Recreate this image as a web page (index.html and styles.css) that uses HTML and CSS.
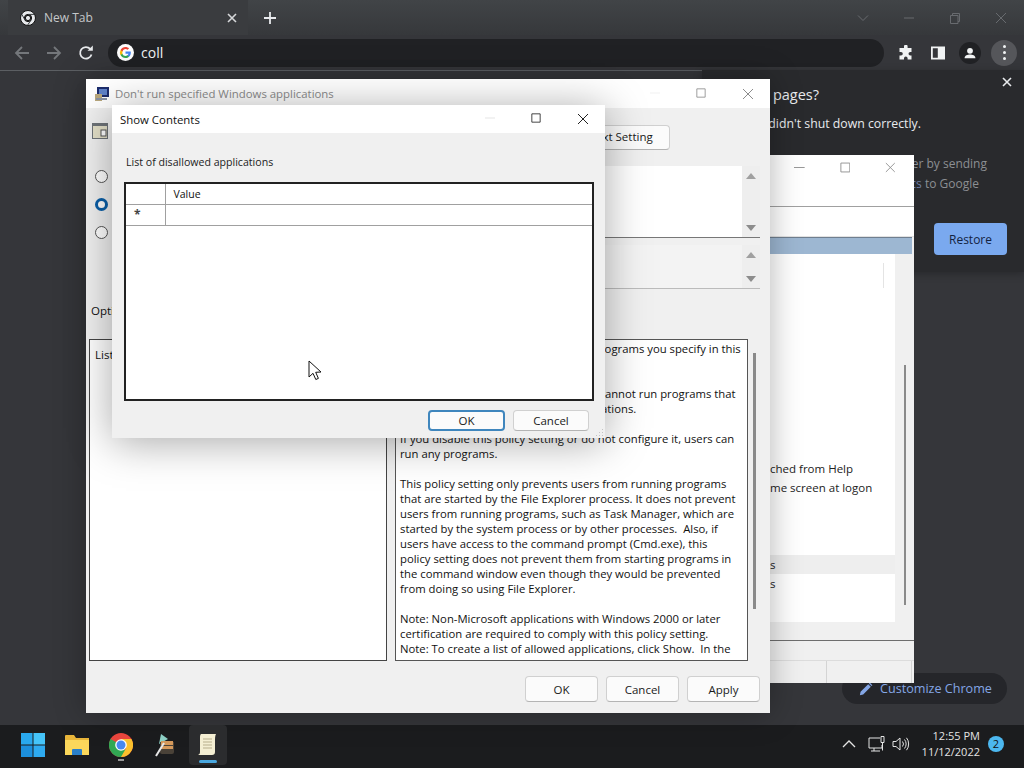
FILE: index.html
```html
<!DOCTYPE html>
<html lang="en">
<head>
    <meta charset="UTF-8">
    <title>New Tab</title>
    <link rel="stylesheet" href="styles.css">
</head>
<body>
    <div class="browser">
        <div class="tabstrip">
            <div class="tab">
                <svg class="tab-favicon" viewBox="0 0 16 16">
                    <circle cx="8" cy="8" r="7.5" fill="#e8eaed"/>
                    <circle cx="8" cy="8" r="3.6" fill="#3c4043"/>
                    <circle cx="8" cy="8" r="2.6" fill="#e8eaed"/>
                    <path d="M8 4.4h6.6M5 10l-3.4-6M10.8 10.4 7.4 15.4" stroke="#3c4043" stroke-width="1"/>
                </svg>
                <span class="tab-title">New Tab</span>
                <svg class="tab-close" viewBox="0 0 10 10"><path d="M1 1l8 8M9 1l-8 8"/></svg>
            </div>
            <svg class="new-tab" viewBox="0 0 12 12"><path d="M6 0v12M0 6h12"/></svg>
            <div class="win-controls">
                <svg viewBox="0 0 12 12"><path d="M1 3.5l5 5 5-5"/></svg>
                <svg viewBox="0 0 12 12"><path d="M1 6h10"/></svg>
                <svg viewBox="0 0 12 12"><path d="M1.5 3.5h7.5v8h-7.5zM3.5 3.5v-2h7v8h-1.500"/></svg>
                <svg viewBox="0 0 12 12"><path d="M1 1l10 10M11 1l-10 10"/></svg>
            </div>
        </div>

        <div class="toolbar">
            <svg class="nav-icon dim" viewBox="0 0 16 16"><path d="M15 8H2M8 2 2 8l6 6"/></svg>
            <svg class="nav-icon dim" viewBox="0 0 16 16"><path d="M1 8h13M8 2l6 6-6 6"/></svg>
            <svg class="nav-icon reload" viewBox="0 0 16 16"><path d="M13.500 9.500A5.800 5.800 0 1 1 12.300 4"/><path class="solid" d="M9.500 5.800h5.300V.5z"/></svg>
            <div class="omnibox">
                <svg class="g-logo" viewBox="0 0 18 18">
                    <circle cx="9" cy="9" r="9" fill="#fff"/>
                    <path d="M14.600 9.200c0-.4 0-.8-.1-1.200H9v2.300h3.100c-.1.700-.5 1.300-1.200 1.700v1.400h1.900c1.100-1 1.800-2.500 1.800-4.200z" fill="#4285f4"/>
                    <path d="M9 14.900c1.600 0 2.900-.5 3.800-1.500L10.900 12c-.5.400-1.200.6-1.900.6-1.500 0-2.800-1-3.200-2.400H3.800v1.500c1 1.900 3 3.200 5.200 3.200z" fill="#34a853"/>
                    <path d="M5.800 10.200a3.500 3.500 0 0 1 0-2.300V6.400H3.800a5.900 5.900 0 0 0 0 5.300z" fill="#fbbc05"/>
                    <path d="M9 5.400c.8 0 1.600.3 2.200.8l1.600-1.600c-1-.9-2.300-1.500-3.800-1.500-2.200 0-4.200 1.300-5.200 3.300l2 1.500c.4-1.400 1.700-2.500 3.200-2.500z" fill="#ea4335"/>
                </svg>
                <span class="omni-text">coll</span>
            </div>
            <svg class="tool-icon" viewBox="0 0 16 16"><path class="solid" d="M6 1.500a1.800 1.800 0 0 1 3.600 0V3h3.900v3.900h-1.200a1.800 1.800 0 0 0 0 3.600h1.200v4H9.600v-1.200a1.800 1.800 0 0 0-3.600 0v1.200H1.500v-4H3a1.800 1.800 0 0 0 0-3.600H1.500V3H6z"/></svg>
            <svg class="tool-icon" viewBox="0 0 16 16"><path class="solid" fill-rule="evenodd" d="M1 1.500h14v13H1zM2.800 3.300v9.400h5V3.300z"/></svg>
            <div class="avatar">
                <svg viewBox="0 0 16 16"><circle class="solid" cx="8" cy="5.500" r="3.300"/><path class="solid" d="M1.800 14c0-3 3.400-4.200 6.200-4.200s6.200 1.200 6.200 4.200z"/></svg>
            </div>
            <div class="menu-btn"><i></i><i></i><i></i></div>
        </div>

        <div class="page">
            <div class="restore-bubble">
                <svg class="bubble-close" viewBox="0 0 10 10"><path d="M1 1l8 8M9 1l-8 8"/></svg>
                <p class="bubble-title">Restore pages?</p>
                <p class="bubble-text">Chromium didn't shut down correctly.</p>
                <p class="bubble-small">Help make Chrome better by sending<br><span class="line-two">usage <span class="bubble-link">statistics</span> to Google</span></p>
                <button class="restore-btn">Restore</button>
            </div>
            <div class="customize-pill">
                <svg viewBox="0 0 16 16"><path class="solid" d="M1 15l.8-3.800L10.500 2.500l3 3-8.700 8.700zM11.300 1.700l1-1 3 3-1 1z"/></svg>
                <span>Customize Chrome</span>
            </div>
        </div>
    </div>

    <!-- editor window behind the policy dialog -->
    <div class="window back-window">
        <div class="titlebar back-title">
            <svg viewBox="0 0 12 12"><path d="M0 6h12"/></svg>
            <svg viewBox="0 0 12 12"><path d="M1 1h10v10H1z"/></svg>
            <svg viewBox="0 0 12 12"><path d="M1 1l10 10M11 1L1 11"/></svg>
        </div>
        <div class="back-toolbar"></div>
        <div class="back-band"></div>
        <div class="back-main">
            <div class="back-content">
                <div class="back-tick"></div>
                <p class="back-line">ched from Help</p>
                <p class="back-line">me screen at logon</p>
                <p class="back-line row-hi">s</p>
                <p class="back-line">s</p>
            </div>
            <div class="back-scroll"><div class="back-thumb"></div></div>
        </div>
        <div class="back-footer"></div>
        <div class="back-status"><span></span><span></span></div>
    </div>

    <!-- policy dialog -->
    <div class="window policy-window">
        <div class="titlebar policy-title">
            <svg class="policy-icon" viewBox="0 0 16 16">
                <rect x="3" y="1" width="12" height="10" fill="#1c2c6c"/>
                <rect x="5" y="3" width="8" height="6" fill="#5f82c8"/>
                <rect x="1" y="8" width="7" height="7" fill="#b9a77c"/>
                <rect x="2" y="12" width="11" height="2" fill="#8a93a5"/>
            </svg>
            <span class="title-text dim-title">Don't run specified Windows applications</span>
            <div class="title-btns">
                <svg viewBox="0 0 12 12"><path d="M0 6h12" stroke-opacity=".15"/></svg>
                <svg viewBox="0 0 12 12"><path d="M1 1h10v10H1z"/></svg>
                <svg viewBox="0 0 12 12"><path d="M1 1l10 10M11 1L1 11"/></svg>
            </div>
        </div>
        <div class="policy-body">
            <div class="policy-head">
                <svg class="setting-icon" viewBox="0 0 16 16">
                    <rect x="0" y="0" width="16" height="16" fill="#6e7378"/>
                    <rect x="1" y="3" width="14" height="12" fill="#e4e0c8"/>
                    <rect x="9" y="7" width="5" height="6" fill="#fff" stroke="#555"/>
                </svg>
                <button class="win-btn next-btn">Next Setting</button>
            </div>
            <div class="policy-mid">
                <div class="radios">
                    <span class="radio"></span>
                    <span class="radio on"></span>
                    <span class="radio"></span>
                </div>
                <div class="policy-fields">
                    <div class="field comment-field">
                        <div class="field-fill"></div>
                        <div class="arrows"><i class="up"></i><i class="down"></i></div>
                    </div>
                    <div class="field support-field">
                        <div class="field-fill grey"></div>
                        <div class="arrows"><i class="up"></i><i class="down"></i></div>
                    </div>
                </div>
            </div>
            <p class="options-label">Options:</p>
            <div class="panes">
                <div class="options-pane">List of disallowed applications</div>
                <div class="help-pane">
                    <div class="help-text">
                        Prevents Windows from running the programs you specify in this<br>
                        policy setting.<br><br>
                        If you enable this policy setting, users cannot run programs that<br>
                        you add to the list of disallowed applications.<br><br>
                        If you disable this policy setting or do not configure it, users can<br>
                        run any programs.<br><br>
                        This policy setting only prevents users from running programs<br>
                        that are started by the File Explorer process. It does not prevent<br>
                        users from running programs, such as Task Manager, which are<br>
                        started by the system process or by other processes.&nbsp; Also, if<br>
                        users have access to the command prompt (Cmd.exe), this<br>
                        policy setting does not prevent them from starting programs in<br>
                        the command window even though they would be prevented<br>
                        from doing so using File Explorer.<br><br>
                        Note: Non-Microsoft applications with Windows 2000 or later<br>
                        certification are required to comply with this policy setting.<br>
                        Note: To create a list of allowed applications, click Show.&nbsp; In the<br>
                        Show Contents dialog box, in the Value column, type the
                    </div>
                </div>
                <div class="help-scroll"><div class="help-thumb"></div></div>
            </div>
            <div class="policy-actions">
                <button class="win-btn action-btn">OK</button>
                <button class="win-btn action-btn">Cancel</button>
                <button class="win-btn action-btn">Apply</button>
            </div>
        </div>
    </div>

    <!-- show contents dialog -->
    <div class="window show-window">
        <div class="titlebar show-title">
            <span class="title-text">Show Contents</span>
            <div class="title-btns dark">
                <svg viewBox="0 0 12 12"><path d="M0 6h12" stroke-opacity=".15"/></svg>
                <svg viewBox="0 0 12 12"><path d="M1 1h10v10H1z"/></svg>
                <svg viewBox="0 0 12 12"><path d="M1 1l10 10M11 1L1 11"/></svg>
            </div>
        </div>
        <div class="show-body">
            <p class="show-label">List of disallowed applications</p>
            <div class="grid-box">
                <table class="value-grid">
                    <thead>
                        <tr><th class="row-head"></th><th>Value</th></tr>
                    </thead>
                    <tbody>
                        <tr><td class="row-head star">*</td><td></td></tr>
                    </tbody>
                </table>
            </div>
            <div class="show-actions">
                <button class="win-btn show-btn default">OK</button>
                <button class="win-btn show-btn">Cancel</button>
            </div>
            <svg class="grip" viewBox="0 0 9 9"><path d="M7 1h1v1H7zM4 4h1v1H4zM7 4h1v1H7zM1 7h1v1H1zM4 7h1v1H4zM7 7h1v1H7z"/></svg>
        </div>
    </div>

    <svg class="cursor" viewBox="0 0 13 21"><path d="M1 1v16l4-3.700 2.800 6.200 2.600-1.100-2.700-6.100 5.300-.3z"/></svg>

    <div class="taskbar">
        <div class="task-icons">
            <svg class="task-icon" viewBox="0 0 24 24">
                <path d="M0 0h11.500v11.500H0z" fill="#29a8ee"/><path d="M12.500 0H24v11.500H12.500z" fill="#45c4f9"/>
                <path d="M0 12.500h11.500V24H0z" fill="#1c8fdc"/><path d="M12.500 12.500H24V24H12.500z" fill="#2eaaf0"/>
            </svg>
            <svg class="task-icon" viewBox="0 0 24 24">
                <path d="M0 3a1 1 0 0 1 1-1h8l2 3h13v17H0z" fill="#e8b53a"/>
                <path d="M0 7h24v15H0z" fill="#fbd75b"/>
                <path d="M7 22v-5a1 1 0 0 1 1-1h8a1 1 0 0 1 1 1v5z" fill="#2a7fc9"/>
            </svg>
            <div class="task-chrome">
                <svg class="task-icon" viewBox="0 0 24 24">
                    <circle cx="12" cy="12" r="12" fill="#e8453c"/>
                    <path d="M12 12 1.600 6A12 12 0 0 0 12 24l5.200-6z" fill="#31a853"/>
                    <path d="M12 6h10.400A12 12 0 0 1 12 24l5.200-9z" fill="#fbc02d"/>
                    <circle cx="12" cy="12" r="5.800" fill="#fff"/>
                    <circle cx="12" cy="12" r="4.500" fill="#4688f1"/>
                </svg>
                <span class="run-dot"></span>
            </div>
            <svg class="task-icon sack" viewBox="0 0 24 24">
                <path d="M8 1l7 5-9 5z" fill="#8fd3c8"/>
                <path d="M7 9h14v10a2 2 0 0 1-2 2H9a2 2 0 0 1-2-2z" fill="#4a4238"/>
                <path d="M8 8h12v4H8zM8 13h12v3H8z" fill="#d59a5c"/>
                <path d="M11 10 3 23" stroke="#e8e8e8" stroke-width="2"/>
            </svg>
            <div class="task-active">
                <svg class="task-icon" viewBox="0 0 24 24">
                    <path d="M5 1h15c-1 2-1 4-1 8v10c0 2-1 3-3 3H2c2-1 2-2 2-4V5C4 3 4 2 5 1z" fill="#f4eed2"/>
                    <path d="M7 6h9M7 9h9M7 12h9M7 15h9" stroke="#b7ae8c"/>
                </svg>
                <span class="active-bar"></span>
            </div>
        </div>
        <div class="tray">
            <svg class="tray-icon small" viewBox="0 0 14 8"><path d="M1 7l6-6 6 6"/></svg>
            <svg class="tray-icon" viewBox="0 0 18 18"><path d="M12 3H1v10h13v-3M6 13v3M3 16h9"/><path d="M13 1.500h3v6h-3zM14.500 7.500v8"/></svg>
            <svg class="tray-icon" viewBox="0 0 18 18"><path d="M1 6.500h3l4-3.500v12l-4-3.500H1zM10.500 6.500a4 4 0 0 1 0 5M12.500 4.500a7 7 0 0 1 0 9M14.500 2.800a10 10 0 0 1 0 12.400"/></svg>
            <div class="clock">12:55 PM<br>11/12/2022</div>
            <span class="notif">2</span>
        </div>
    </div>
</body>
</html>
```

FILE: styles.css
```css
* {
    margin: 0;
    padding: 0;
    box-sizing: border-box;
}

html, body {
    width: 1024px;
    height: 768px;
    overflow: hidden;
}

body {
    position: relative;
    font-family: "Open Sans", "Noto Sans", sans-serif;
    font-size: 11.500px;
    background: #35363a;
    color: #111;
}

svg {
    display: block;
    fill: none;
    stroke: currentColor;
}

svg .solid {
    fill: currentColor;
    stroke: none;
}

/* browser chrome */
.browser {
    height: 725px;
    display: flex;
    flex-direction: column;
}

.tabstrip {
    height: 35px;
    display: flex;
    align-items: center;
    background: linear-gradient(#414447, #36383b);
    padding-left: 8px;
}

.tab {
    width: 240px;
    height: 35px;
    display: flex;
    align-items: center;
    padding: 0 11px 0 12px;
    background: #3a3c3f;
}

.tab-favicon {
    width: 16px;
    height: 16px;
}

.tab-title {
    margin-left: 8px;
    flex: 1;
    color: #c4c7ca;
    font-size: 12px;
}

.tab-close {
    width: 10px;
    height: 10px;
    color: #d6d8da;
    stroke-width: 1.6;
}

.new-tab {
    width: 12px;
    height: 12px;
    margin-left: 16px;
    color: #e8eaed;
    stroke-width: 1.800;
}

.win-controls {
    margin-left: auto;
    display: flex;
    gap: 34px;
    padding-right: 17px;
    color: #686b6f;
}

.win-controls svg {
    width: 12px;
    height: 12px;
}

.toolbar {
    height: 36px;
    display: flex;
    align-items: center;
    background: #35363a;
    border-bottom: 1px solid #5c5f63;
    padding-left: 14px;
}

.nav-icon {
    width: 16px;
    height: 16px;
    margin-right: 16px;
    color: #e8eaed;
    stroke-width: 1.800;
}

.nav-icon.dim {
    color: #74777b;
}

.nav-icon.reload {
    margin-right: 14px;
}

.omnibox {
    width: 776px;
    height: 28px;
    display: flex;
    align-items: center;
    padding-left: 9px;
    border-radius: 14px;
    background: #202124;
}

.g-logo {
    width: 17px;
    height: 17px;
    stroke: none;
}

.omni-text {
    margin-left: 7px;
    color: #f1f3f4;
    font-size: 14px;
}

.tool-icon {
    width: 16px;
    height: 16px;
    margin-left: 14px;
    color: #f1f3f4;
}

.tool-icon + .tool-icon {
    margin-left: 16px;
}

.avatar {
    width: 22px;
    height: 22px;
    margin-left: 13px;
    padding: 4px;
    border-radius: 50%;
    background: #202124;
    color: #f1f3f4;
}

.avatar svg {
    width: 14px;
    height: 14px;
}

.menu-btn {
    width: 26px;
    height: 26px;
    margin-left: 10px;
    border-radius: 50%;
    background: #55565a;
    display: flex;
    flex-direction: column;
    align-items: center;
    justify-content: center;
    gap: 3px;
}

.menu-btn i {
    width: 3px;
    height: 3px;
    border-radius: 50%;
    background: #f1f3f4;
}

.page {
    flex: 1;
    position: relative;
    background: #35363a;
}

.restore-bubble {
    position: absolute;
    top: -1px;
    right: 0;
    width: 322px;
    height: 202px;
    background: #292a2d;
    color: #e8eaed;
    box-shadow: 0 2px 8px rgba(0, 0, 0, 0.25);
}

.bubble-close {
    position: absolute;
    top: 7px;
    right: 12px;
    width: 10px;
    height: 10px;
    stroke-width: 1.600;
}

.bubble-title {
    position: absolute;
    top: 15px;
    right: 205px;
    font-size: 14.500px;
    white-space: nowrap;
}

.bubble-text {
    position: absolute;
    top: 45px;
    right: 103px;
    font-size: 12.300px;
    white-space: nowrap;
}

.bubble-small {
    position: absolute;
    top: 84px;
    right: 37px;
    width: 320px;
    font-size: 12px;
    line-height: 20px;
    color: #8c8f93;
    white-space: nowrap;
    text-align: right;
}

.line-two {
    padding-right: 8px;
}

.bubble-link {
    color: #6f7fa8;
}

.restore-btn {
    position: absolute;
    top: 153px;
    right: 17px;
    width: 73px;
    height: 32px;
    border: none;
    border-radius: 4px;
    background: #7aa9ef;
    color: #14233f;
    font-family: inherit;
    font-size: 12px;
}

.customize-pill {
    position: absolute;
    top: 602px;
    right: 17px;
    width: 165px;
    height: 31px;
    display: flex;
    align-items: center;
    gap: 7px;
    padding-left: 17px;
    border-radius: 16px;
    background: #25262a;
    color: #84a6e6;
    font-size: 12.600px;
}

.customize-pill svg {
    width: 14px;
    height: 14px;
}

/* windows */
.window {
    position: absolute;
    background: #f0f0f0;
}

.titlebar {
    display: flex;
    align-items: center;
    background: #fff;
}

.title-text {
    font-size: 11.400px;
    white-space: nowrap;
}

.dim-title {
    color: #8b8b8b;
}

.title-btns {
    margin-left: auto;
    display: flex;
    color: #8c8c8c;
}

.title-btns.dark {
    color: #222;
}

.title-btns svg {
    width: 10px;
    height: 10px;
    margin-right: 36px;
}

.title-btns svg:last-child {
    width: 12px;
    height: 12px;
    margin-right: 16px;
}

.back-window {
    left: 770px;
    top: 155px;
    width: 144px;
    height: 528px;
    display: flex;
    flex-direction: column;
}

.back-title {
    height: 52px;
    flex: none;
    border-bottom: 1px solid #a0a0a0;
    color: #8c8c8c;
    justify-content: flex-end;
    gap: 35px;
    padding: 0 18px 26px 24px;
}

.back-title svg {
    width: 11px;
    height: 11px;
}

.back-toolbar {
    height: 30px;
    flex: none;
    background: #fff;
    border-bottom: 1px solid #e2e2e2;
}

.back-band {
    height: 17px;
    margin-right: 2px;
    flex: none;
    background: #9db7d2;
    border-top: 1px solid #6f7f90;
}

.back-main {
    height: 368px;
    flex: none;
    display: flex;
}

.back-content {
    width: 125px;
    padding-top: 205px;
    background: #fff;
    position: relative;
    color: #222;
    white-space: nowrap;
}

.back-tick {
    position: absolute;
    top: 9px;
    right: 11px;
    width: 1px;
    height: 25px;
    background: #e4e4e4;
}

.back-line {
    height: 19px;
    line-height: 19px;
}

.row-hi {
    margin-top: 58px;
    background: #eee;
}

.back-scroll {
    flex: 1;
    display: flex;
    justify-content: center;
    padding-top: 111px;
}

.back-thumb {
    width: 2px;
    height: 240px;
    background: #8a8a8a;
}

.back-footer {
    height: 19px;
    flex: none;
    border-bottom: 1px solid #6e6e6e;
}

.back-status {
    flex: 1;
    display: flex;
    margin-top: 19px;
    border-top: 1px solid #dcdcdc;
}

.back-status span {
    width: 57px;
    border-right: 1px solid #d4d4d4;
}

.back-status span + span {
    width: 85px;
}

.policy-window {
    left: 86px;
    top: 79px;
    width: 684px;
    height: 634px;
    display: flex;
    flex-direction: column;
    box-shadow: 0 0 30px rgba(0, 0, 0, 0.3);
}

.policy-title {
    height: 29px;
    flex: none;
    padding-left: 8px;
}

.policy-icon {
    width: 16px;
    height: 16px;
    margin-right: 5px;
    stroke: none;
}

.policy-body {
    flex: 1;
    display: flex;
    flex-direction: column;
    padding: 17px 10px 10px 3px;
}

.policy-head {
    height: 25px;
    display: flex;
    justify-content: space-between;
    padding-right: 90px;
}

.setting-icon {
    width: 16px;
    height: 16px;
    margin: -2px 0 0 3px;
    stroke: none;
}

.win-btn {
    border: 1px solid #d0d0d0;
    border-bottom-color: #b4b4b4;
    border-radius: 4px;
    background: #fbfbfb;
    color: #1a1a1a;
    font: inherit;
}

.next-btn {
    width: 100px;
    padding-bottom: 2px;
}

.policy-mid {
    display: flex;
    margin-top: 16px;
    height: 123px;
}

.radios {
    width: 285px;
    display: flex;
    flex-direction: column;
    gap: 15px;
    padding: 4px 0 0 6px;
}

.radio {
    width: 13px;
    height: 13px;
    border-radius: 50%;
    border: 1px solid #555;
    background: #fff;
}

.radio.on {
    border: 3.500px solid #0a5fa8;
}

.policy-fields {
    flex: 1;
}

.field {
    display: flex;
    border-bottom: 1px solid #777;
}

.comment-field {
    height: 72px;
    margin-bottom: 7px;
}

.support-field {
    height: 44px;
    border-bottom-color: #bbb;
}

.field-fill {
    flex: 1;
    background: #fff;
}

.field-fill.grey {
    background: #f3f3f3;
}

.arrows {
    width: 18px;
    display: flex;
    flex-direction: column;
    justify-content: space-between;
    align-items: center;
    padding: 7px 0 6px;
    background: #eee;
}

.arrows i {
    width: 0;
    height: 0;
    border-left: 5px solid transparent;
    border-right: 5px solid transparent;
}

.arrows .up {
    border-bottom: 6px solid #a0a0a0;
}

.arrows .down {
    border-top: 6px solid #8c8c8c;
}

.options-label {
    margin: 13px 0 0 2px;
    height: 18px;
    line-height: 18px;
}

.panes {
    display: flex;
    height: 322px;
    margin-top: 19px;
}

.options-pane {
    width: 298px;
    border: 1px solid #444;
    background: #fff;
    padding: 7px 5px;
}

.help-pane {
    width: 353px;
    margin-left: 8px;
    border: 1px solid #555;
    background: #fff;
    overflow: hidden;
    padding: 1px 0 0 4px;
    font-size: 11.300px;
}

.help-text {
    line-height: 15px;
    white-space: nowrap;
}

.help-scroll {
    flex: 1;
    display: flex;
    justify-content: center;
    padding-top: 14px;
}

.help-thumb {
    width: 3px;
    height: 256px;
    background: #8a8a8a;
}

.policy-actions {
    display: flex;
    justify-content: flex-end;
    gap: 8px;
    margin-top: 15px;
}

.action-btn {
    width: 73px;
    height: 26px;
}

.show-window {
    left: 112px;
    top: 105px;
    width: 493px;
    height: 333px;
    display: flex;
    flex-direction: column;
    box-shadow: 0 4px 40px rgba(0, 0, 0, 0.35);
}

.show-title {
    height: 28px;
    flex: none;
    padding-left: 8px;
}

.show-body {
    flex: 1;
    position: relative;
    padding: 20px 11px 0 12px;
}

.show-label {
    padding-left: 2px;
    height: 18px;
    line-height: 18px;
    font-size: 10.600px;
    color: #222;
}

.grid-box {
    height: 219px;
    margin-top: 11px;
    border: 2px solid #222;
    background: #fff;
}

.value-grid {
    width: 100%;
    border-collapse: collapse;
    font-size: 10.500px;
}

.value-grid th {
    height: 20px;
}

.value-grid th,
.value-grid td {
    border-bottom: 1px solid #a0a0a0;
    border-right: 1px solid #a0a0a0;
    font-weight: normal;
    text-align: left;
    padding-left: 8px;
}

.value-grid td {
    height: 21px;
}

.value-grid th:last-child,
.value-grid td:last-child {
    border-right: none;
}

.value-grid .row-head {
    width: 39px;
}

.value-grid .star {
    font-size: 12px;
    font-weight: bold;
    padding-left: 8px;
    color: #444;
}

.show-actions {
    display: flex;
    justify-content: flex-end;
    gap: 8px;
    margin-top: 9px;
    padding-right: 5px;
}

.show-btn {
    width: 76px;
    height: 21px;
}

.show-btn.default {
    width: 77px;
    border: 2px solid #3f86bd;
}

.grip {
    position: absolute;
    right: 1px;
    bottom: 1px;
    width: 9px;
    height: 9px;
    fill: #c4c4c4;
    stroke: none;
}

.cursor {
    position: absolute;
    left: 308px;
    top: 360px;
    width: 13px;
    height: 21px;
    fill: #fff;
    stroke: #111;
}

/* taskbar */
.taskbar {
    height: 43px;
    display: flex;
    align-items: flex-start;
    justify-content: space-between;
    background: #1b1c1e;
    padding-left: 21px;
}

.task-icons {
    display: flex;
    align-items: flex-start;
    padding-top: 8px;
}

.task-icon {
    width: 24px;
    height: 24px;
    stroke: none;
}

.task-icons > .task-icon,
.task-chrome {
    margin-right: 20px;
}

.task-chrome {
    position: relative;
}

.run-dot {
    position: absolute;
    left: 9px;
    top: 26px;
    width: 6px;
    height: 2px;
    background: #9a9a9a;
}

.task-active {
    position: relative;
    width: 38px;
    height: 40px;
    margin: -8px 0 0 -8px;
    padding: 8px 7px 0;
    border-radius: 4px;
    background: #2b2c2e;
}

.active-bar {
    position: absolute;
    left: 10px;
    bottom: 2px;
    width: 18px;
    height: 3px;
    border-radius: 2px;
    background: #4aa8e0;
}

.tray {
    display: flex;
    align-items: center;
    height: 38px;
    color: #e4e4e4;
}

.tray-icon {
    width: 18px;
    height: 18px;
    margin-right: 6px;
    stroke-width: 1;
}

.tray-icon.small {
    width: 14px;
    height: 8px;
    margin-right: 12px;
    margin-left: -1px;
    stroke-width: 1.300;
}

.clock {
    width: 63px;
    margin-left: 1px;
    text-align: right;
    font-size: 11px;
    line-height: 16px;
}

.notif {
    width: 16px;
    height: 16px;
    margin: 0 20px 0 8px;
    border-radius: 50%;
    background: #4cb8f0;
    color: #111;
    font-size: 11px;
    line-height: 16px;
    text-align: center;
}
```
